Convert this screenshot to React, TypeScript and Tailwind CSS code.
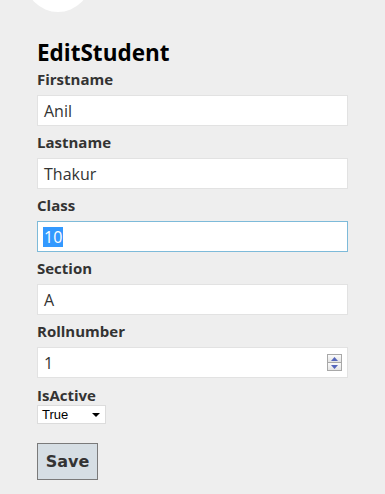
import React from "react";

const fields = [
    { label: "Firstname", value: "Anil" },
    { label: "Lastname", value: "Thakur" },
    { label: "Class", value: "10", focused: true },
    { label: "Section", value: "A" },
    { label: "Rollnumber", value: "1", number: true },
];

function Spinner() {
    return (
        <div className="flex flex-col w-[15px] h-[17px] border border-[#a8a8a8] bg-[#f4f4f4]">
            <div className="flex-1 flex items-center justify-center border-b border-[#a8a8a8] bg-gradient-to-b from-[#fafafa] to-[#e4e4e4]">
                <svg width="7" height="4" viewBox="0 0 7 4">
                    <path d="M0 4 L3.5 0 L7 4 Z" fill="#5566bb" />
                </svg>
            </div>
            <div className="flex-1 flex items-center justify-center bg-gradient-to-b from-[#fafafa] to-[#e4e4e4]">
                <svg width="7" height="4" viewBox="0 0 7 4">
                    <path d="M0 0 L3.5 4 L7 0 Z" fill="#5566bb" />
                </svg>
            </div>
        </div>
    );
}

export default function App() {
    return (
        <div className="min-h-[494px] bg-[#eeeeee] overflow-hidden font-['Open_Sans',sans-serif]">
            {/* decorative circle cut by the top edge */}
            <div className="w-[66px] h-[66px] rounded-full bg-white -mt-[54px] ml-[25px]" />

            <div className="pl-[37px] w-[348px]">
                <h1 className="mt-[27px] mb-[2px] text-[22.5px] leading-[28px] font-bold text-black">
                    EditStudent
                </h1>

                {fields.map((f) => (
                    <div key={f.label} className="flex flex-col">
                        <label className="text-[15px] leading-[20px] font-bold text-[#333333] mb-[6px]">
                            {f.label}
                        </label>
                        {f.focused ? (
                            <div className="h-[31px] mb-[6px] bg-white border border-[#7dbad9] flex items-center pl-[5px] text-[16px]">
                                <span className="bg-[#3399ff] text-white leading-[20px] px-[1px]">
                                    {f.value}
                                </span>
                            </div>
                        ) : (
                            <div className="h-[31px] mb-[6px] bg-white border border-[#e2e2e2] flex items-center justify-between pl-[6px] pr-[5px] text-[16px] text-[#333333]">
                                <span className="leading-[20px]">{f.value}</span>
                                {f.number && <Spinner />}
                            </div>
                        )}
                    </div>
                ))}

                <label className="block text-[15px] leading-[20px] font-bold text-[#333333] mt-[1px]">
                    IsActive
                </label>
                <div className="w-[69px] h-[19px] bg-white border border-[#dcdcdc] flex items-center justify-between pl-[4px] pr-[5px] text-[13px] text-black font-['Liberation_Sans',sans-serif]">
                    <span>True</span>
                    <svg width="8" height="4" viewBox="0 0 8 4">
                        <path d="M0 0 L8 0 L4 4 Z" fill="#000" />
                    </svg>
                </div>

                <button className="mt-[19px] w-[61px] h-[37px] bg-[#d6dee4] border border-[#7a7a7a] text-[16px] font-bold text-[#333333] font-['DejaVu_Sans',sans-serif]">
                    Save
                </button>
            </div>
        </div>
    );
}
